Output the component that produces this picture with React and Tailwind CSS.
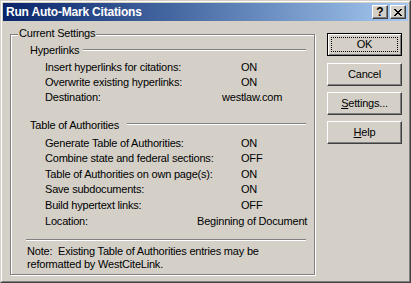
import React from 'react';

const hyperlinkRows = [
  { label: 'Insert hyperlinks for citations:', value: 'ON', pad: 'pl-[44px]', h: 'h-[15px] leading-[15px]' },
  { label: 'Overwrite existing hyperlinks:', value: 'ON', pad: 'pl-[44px]', h: 'h-[15px] leading-[15px]' },
  { label: 'Destination:', value: 'westlaw.com', pad: 'pl-[25px]', h: 'h-[14px] leading-[14px]' },
];

const toaRows = [
  { label: 'Generate Table of Authorities:', value: 'ON', pad: 'pl-[44px]' },
  { label: 'Combine state and federal sections:', value: 'OFF', pad: 'pl-[44px]' },
  { label: 'Table of Authorities on own page(s):', value: 'ON', pad: 'pl-[44px]' },
  { label: 'Save subdocuments:', value: 'ON', pad: 'pl-[44px]' },
  { label: 'Build hypertext links:', value: 'OFF', pad: 'pl-[44px]' },
  { label: 'Location:', value: 'Beginning of Document', pad: 'pl-0' },
];

const Etched = () => (
  <div className="h-[2px] border-t border-t-[#808080] border-b border-b-white" />
);

const Row = ({ row, h }) => (
  <div className={`grid grid-cols-[152px_1fr] pl-[34px] whitespace-nowrap ${h}`}>
    <span>{row.label}</span>
    <span className={row.pad}>{row.value}</span>
  </div>
);

const Button = ({ children, isDefault }) => {
  if (isDefault) {
    return (
      <div className="relative w-[75px] h-[23px] mb-[1px] border border-black bg-[#d4d0c8] shadow-[inset_1px_1px_0_#fff,inset_-1px_-1px_0_#808080] flex items-center justify-center">
        <div className="absolute inset-[3px] border border-dotted border-black" />
        <span>{children}</span>
      </div>
    );
  }
  return (
    <div className="w-[75px] h-[23px] border border-t-white border-l-white border-r-[#404040] border-b-[#404040] bg-[#d4d0c8] shadow-[inset_-1px_-1px_0_#808080] flex items-center justify-center">
      <span>{children}</span>
    </div>
  );
};

const CaptionButton = ({ children }) => (
  <div className="w-[16px] h-[14px] border border-t-white border-l-white border-r-[#404040] border-b-[#404040] bg-[#d4d0c8] shadow-[inset_-1px_-1px_0_#808080] flex items-center justify-center">
    {children}
  </div>
);

export default function App() {
  return (
    <div className="w-[411px] h-[283px] bg-[#d4d0c8] font-['Liberation_Sans',Arial,sans-serif] text-[11px] tracking-[-0.2px] text-black border border-t-[#d4d0c8] border-l-[#d4d0c8] border-r-[#404040] border-b-[#404040]">
      <div className="h-full border border-t-white border-l-white border-r-[#808080] border-b-[#808080] p-px flex flex-col">
        {/* title bar */}
        <div className="h-[18px] flex items-center bg-gradient-to-r from-[#0a246a] to-[#a6caf0] pl-[3px] pr-[2px]">
          <span className="flex-1 text-white font-bold text-[12px] leading-[18px] whitespace-nowrap">
            Run Auto-Mark Citations
          </span>
          <div className="flex gap-[2px]">
            <CaptionButton>
              <span className="font-bold text-[12px] leading-[12px] tracking-normal">?</span>
            </CaptionButton>
            <CaptionButton>
              <svg width="8" height="7" viewBox="0 0 8 7" shapeRendering="crispEdges">
                <path
                  fill="#000"
                  d="M0 0h2v1H0zM6 0h2v1H6zM1 1h2v1H1zM5 1h2v1H5zM2 2h4v1H2zM3 3h2v1H3zM2 4h4v1H2zM1 5h2v1H1zM5 5h2v1H5zM0 6h2v1H0zM6 6h2v1H6z"
                />
              </svg>
            </CaptionButton>
          </div>
        </div>

        {/* body */}
        <div className="flex-1 flex items-start pl-[7px]">
          <div className="relative mt-[13px] w-[305px] h-[241px] border border-[#808080] shadow-[inset_1px_1px_0_#fff,1px_1px_0_#fff] pr-[8px]">
            <span className="absolute left-[7px] top-[-8px] px-[1px] bg-[#d4d0c8] leading-[13px] whitespace-nowrap">
              Current Settings
            </span>

            <div className="mt-[8px] h-[14px] flex items-center pl-[19px]">
              <span className="w-[53px] whitespace-nowrap">Hyperlinks</span>
              <div className="flex-1">
                <Etched />
              </div>
            </div>
            <div className="mt-[3px] flex flex-col">
              {hyperlinkRows.map((r) => (
                <Row key={r.label} row={r} h={r.h} />
              ))}
            </div>

            <div className="mt-[14px] h-[14px] flex items-center pl-[19px]">
              <span className="w-[97px] whitespace-nowrap">Table of Authorities</span>
              <div className="flex-1 mb-[3px]">
                <Etched />
              </div>
            </div>
            <div className="mt-[3.5px] flex flex-col">
              {toaRows.map((r) => (
                <Row key={r.label} row={r} h="h-[15.65px] leading-[15.65px]" />
              ))}
            </div>

            <div className="mt-[9.6px] pl-[15px]">
              <Etched />
            </div>
            <p className="mt-[4px] pl-[16px] leading-[13px]">
              Note:&nbsp; Existing Table of Authorities entries may be
              <br />
              reformatted by WestCiteLink.
            </p>
          </div>

          <div className="ml-[12px] mt-[12px] flex flex-col gap-[6px]">
            <Button isDefault>OK</Button>
            <Button>Cancel</Button>
            <Button>
              <u>S</u>ettings...
            </Button>
            <Button>
              <u>H</u>elp
            </Button>
          </div>
        </div>
      </div>
    </div>
  );
}
